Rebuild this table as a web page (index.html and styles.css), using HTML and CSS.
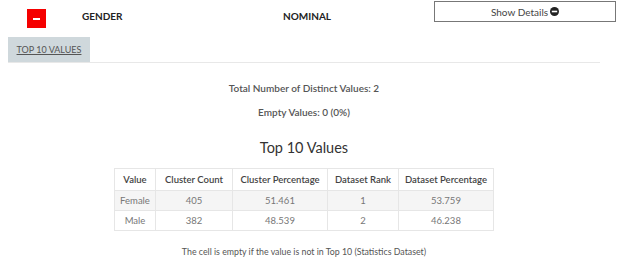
FILE: index.html
```html
<!DOCTYPE html>
<html>
<head>
<meta charset="utf-8">
<link rel="stylesheet" href="styles.css">
</head>
<body>
<div class="header">
  <div class="collapse"><span class="bar"></span></div>
  <div class="name">GENDER</div>
  <div class="type">NOMINAL</div>
  <button class="details">Show Details <svg class="ico" viewBox="0 0 10 10" width="9" height="9"><circle cx="5" cy="5" r="5" fill="#222"/><rect x="2" y="4.1" width="6" height="1.8" fill="#fff"/></svg></button>
</div>
<div class="panel">
  <div class="tabs"><span class="tab">TOP 10 VALUES</span></div>
  <div class="content">
    <p class="stat">Total Number of Distinct Values: 2</p>
    <p class="stat">Empty Values: 0 (0%)</p>
    <h3 class="title">Top 10 Values</h3>
    <table class="values">
      <thead>
        <tr><th class="c1">Value</th><th class="c2">Cluster Count</th><th class="c3">Cluster Percentage</th><th class="c4">Dataset Rank</th><th class="c5">Dataset Percentage</th></tr>
      </thead>
      <tbody>
        <tr class="odd"><td>Female</td><td>405</td><td>51.461</td><td>1</td><td>53.759</td></tr>
        <tr><td>Male</td><td>382</td><td>48.539</td><td>2</td><td>46.238</td></tr>
      </tbody>
    </table>
    <p class="note">The cell is empty if the value is not in Top 10 (Statistics Dataset)</p>
  </div>
</div>
</body>
</html>
```
FILE: styles.css
```css
html, body {
  margin: 0;
  padding: 0;
  background: #fff;
  font-family: Lato, "Open Sans", sans-serif;
  color: #333;
}
.header {
  display: flex;
  align-items: flex-start;
  height: 37px;
  padding-top: 1px;
  box-sizing: border-box;
}
.collapse {
  margin: 8px 0 0 27px;
  width: 19px;
  height: 19px;
  background: #f50000;
  display: flex;
  align-items: center;
  justify-content: center;
}
.bar {
  width: 7px;
  height: 2px;
  background: #fff;
}
.name {
  margin: 9px 0 0 36px;
  width: 201px;
  font-size: 10px;
  font-weight: 700;
  color: #222;
}
.type {
  margin-top: 9px;
  width: 151px;
  font-size: 10px;
  font-weight: 700;
  color: #222;
}
.details {
  width: 182px;
  height: 21px;
  margin: 0;
  padding: 0;
  background: #fff;
  border: 1px solid #777;
  font-family: Lato, sans-serif;
  font-size: 10px;
  color: #444;
  display: flex;
  align-items: center;
  justify-content: center;
  gap: 2px;
  box-sizing: border-box;
}
.panel {
  margin: 0 24px 0 8px;
}
.tabs {
  border-bottom: 1px solid #e8e8e8;
  height: 25px;
}
.tab {
  display: inline-block;
  width: 82px;
  height: 25px;
  line-height: 25px;
  background: #cfd8dc;
  color: #555;
  font-size: 9px;
  text-decoration: underline;
  text-align: center;
}
.content {
  display: flex;
  flex-direction: column;
  align-items: center;
}
.stat {
  margin: 0;
  font-size: 10px;
  font-weight: 600;
  color: #555;
  line-height: 12px;
}
.stat:first-child { margin-top: 19px; }
.stat + .stat { margin-top: 12px; }
.title {
  margin: 21px 0 0;
  font-size: 14.5px;
  font-weight: 400;
  color: #333;
  line-height: 18px;
}
.values {
  margin-top: 11px;
  border-collapse: collapse;
  width: 380px;
  font-size: 9.5px;
  color: #777;
}
.values th, .values td {
  border: 1px solid #e6e6e6;
  text-align: center;
  padding: 0;
}
.values th {
  height: 21px;
  color: #444;
  font-weight: 600;
}
.values td { height: 19px; }
.values tr.odd td { background: #f5f5f5; }
.c1 { width: 40px; }
.c2 { width: 76px; }
.c3 { width: 94px; }
.c4 { width: 70px; }
.values .c5 { width: auto; }
.note {
  margin: 15px 0 0;
  font-size: 8.8px;
  line-height: 11px;
  color: #555;
}
```
